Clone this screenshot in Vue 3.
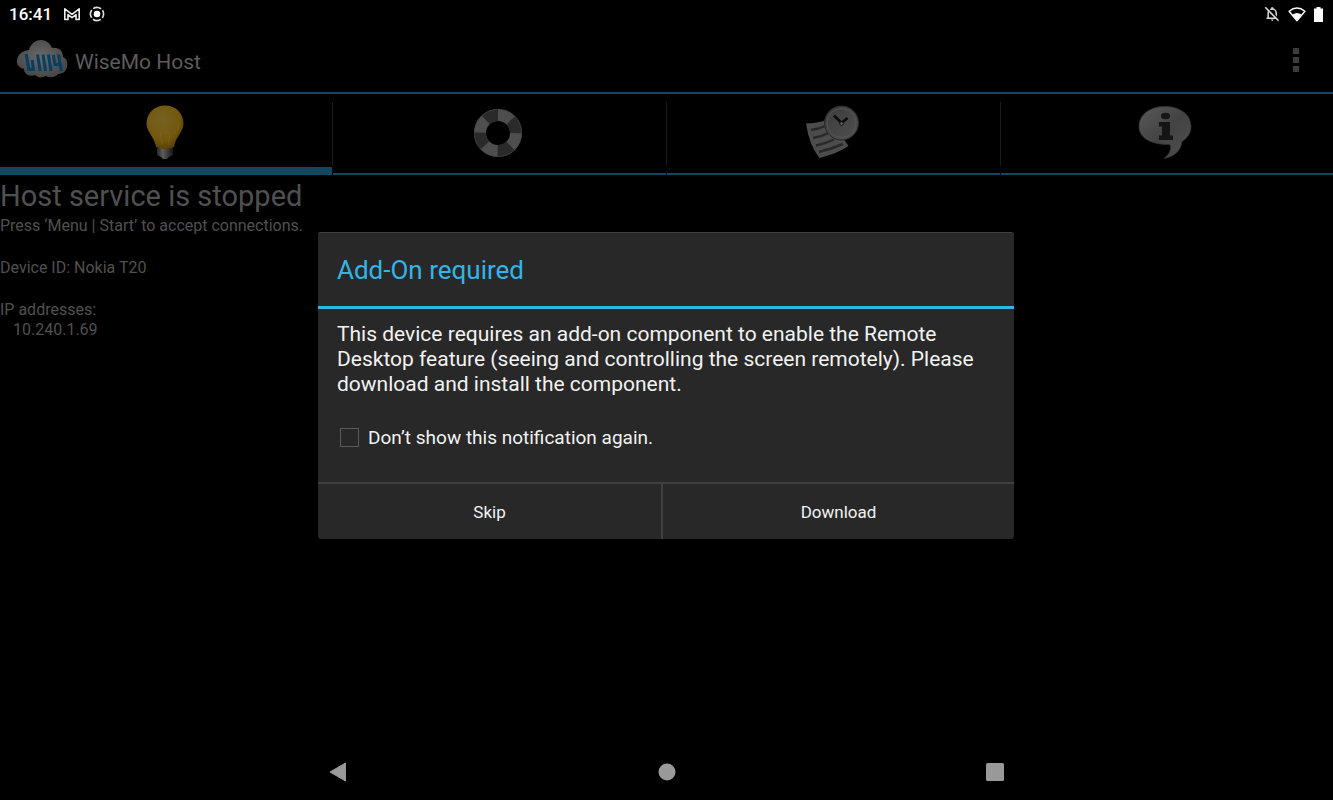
<template>
  <div class="screen">
    <header class="status">
      <div class="status-group">
        <time class="clock">16:41</time>
        <svg width="18" height="14" viewBox="0 0 18 14" aria-hidden="true">
          <path d="M1.800 12.500V1.800L9 7.300l7.200-5.500v10.700h-3.200V7.600L9 10.600 5 7.600v4.900z" fill="none" stroke="#eee" stroke-width="1.600" stroke-linejoin="round" />
        </svg>
        <svg width="16" height="16" viewBox="0 0 16 16" aria-hidden="true">
          <circle cx="8" cy="8" r="3.300" fill="#fff" />
          <circle cx="8" cy="8" r="6.600" fill="none" stroke="#ddd" stroke-width="1.600" stroke-dasharray="8.370 2" stroke-dashoffset="4.180" />
        </svg>
      </div>
      <div class="status-group right">
        <svg width="16" height="16" viewBox="0 0 16 16" aria-hidden="true">
          <path d="M4.200 11.800V7a4 4 0 0 1 8 0v4.800M2.500 12.200h11.300" fill="none" stroke="#ddd" stroke-width="1.500" />
          <path d="M7.200 1.200h2v2h-2zM6.800 13.600h2.800l-1.400 1.600z" fill="#ddd" />
          <path d="M2.600.9l13 13.400" stroke="#000" stroke-width="1.500" />
          <path d="M1.200 1.200l13.400 13.600" stroke="#ddd" stroke-width="1.500" />
        </svg>
        <svg width="18" height="15" viewBox="0 0 18 15" aria-hidden="true">
          <path d="M1.100 4.300Q9-2.300 16.900 4.300L9 13.700z" fill="none" stroke="#fff" stroke-width="1.400" stroke-linejoin="round" />
          <path d="M4.600 7.600Q9 4.400 13.400 7.600L9 13.500z" fill="#fff" />
        </svg>
        <svg width="9" height="15" viewBox="0 0 9 15" aria-hidden="true">
          <path d="M2.500 0h4v1.500H9V15H0V1.500h2.500z" fill="#fff" />
        </svg>
      </div>
    </header>

    <main class="app">
      <div class="app-bar">
        <svg class="logo" width="52" height="40" viewBox="0 0 52 40" aria-hidden="true">
          <defs>
            <radialGradient id="cloud" cx=".48" cy=".45" r=".6">
              <stop offset="0" stop-color="#696969" />
              <stop offset="1" stop-color="#444" />
            </radialGradient>
          </defs>
          <path d="M13 10C15 3 20 0 25 0s9 3 11 8c7-1 11 3 11 9 4 2 5 6 4 10-1 5-5 7-9 7-3 4-9 4-12 2-4 2-8 2-11-1-6 2-11-1-11-6-4-1-8-4-7-9 1-6 5-9 12-10z" fill="url(#cloud)" />
          <path d="M10.200 14l2.600 15.500h4.600L16.200 20M21.500 14.500l2.700 16.500M27 14.500l2.500 16.500M32.300 14.500l2.800 16.500M37.300 15l1.700 9.500h4.500M42.500 14.500l2.800 16.500" fill="none" stroke="#063f61" stroke-width="3" />
        </svg>
        <h1>{{ appName }}</h1>
        <button class="menu" type="button" aria-label="More options">
          <i></i><i></i><i></i>
        </button>
      </div>

      <nav class="tabs">
        <button
          v-for="tab in tabs"
          :key="tab"
          type="button"
          :class="{ active: tab === current }"
          :aria-label="tab"
          @click="current = tab"
        >
          <svg v-if="tab === 'Status'" width="56" height="56" viewBox="0 0 56 56">
            <defs>
              <radialGradient id="bulb" cx=".42" cy=".35" r=".65">
                <stop offset="0" stop-color="#756323" />
                <stop offset=".7" stop-color="#72570d" />
                <stop offset="1" stop-color="#5b4208" />
              </radialGradient>
              <linearGradient id="cap">
                <stop offset="0" stop-color="#252525" />
                <stop offset=".35" stop-color="#5c5c5c" />
                <stop offset="1" stop-color="#181818" />
              </linearGradient>
            </defs>
            <path d="M21 43h16v7l-4 2-2 2h-4l-2-2-4-2z" fill="url(#cap)" />
            <path d="M29 .5c11 0 18.500 8 18.500 18 0 9-7.500 12-9.500 23.500q-9 4-18 0C18 30.500 10.500 27.500 10.500 18.500 10.500 8.500 18 .5 29 .5z" fill="url(#bulb)" />
            <path d="M26 40l-2-13 4 2 3-2 3 2-2 11M43 17q1 8-5 12" fill="none" stroke="#896b1c" stroke-width="1" opacity=".4" />
          </svg>
          <svg v-else-if="tab === 'Help'" width="56" height="56" viewBox="0 0 56 56">
            <circle cx="28" cy="28" r="18" fill="none" stroke="#4e4e4e" stroke-width="12" />
            <circle cx="28" cy="28" r="18" fill="none" stroke="#2a2a2a" stroke-width="12" stroke-dasharray="14.137 14.137" stroke-dashoffset="14.137" transform="rotate(-90 28 28)" />
            <circle cx="28" cy="28" r="23.500" fill="none" stroke="#444" stroke-width=".8" opacity=".7" />
          </svg>
          <svg v-else-if="tab === 'Log'" width="56" height="56" viewBox="0 0 56 56">
            <defs>
              <linearGradient id="clock" x1="0" y1="0" x2="1" y2="1">
                <stop offset="0" stop-color="#3b3b3b" />
                <stop offset="1" stop-color="#505050" />
              </linearGradient>
            </defs>
            <path d="M2 18.500q10 0 24-4.500l18.500 27q-10 7-29 12Q5 40 2 18.500z" fill="#4c4c4c" />
            <path d="M7 25q8-1 14-4M9 33q8-1 15-5M12 40.500q10-2 18-6M15 47q12-3 24-8" fill="none" stroke="#292929" stroke-width="2.500" />
            <circle cx="37.500" cy="18" r="17" fill="url(#clock)" stroke="#292929" />
            <circle cx="37.500" cy="18" r="14.500" fill="none" stroke="#575757" stroke-width=".8" />
            <path d="M30 10.500l7.500 7.500 6-5" fill="none" stroke="#0b0b0b" stroke-width="2.500" />
            <circle cx="37.500" cy="18.500" r="1.800" fill="#666" stroke="#111" />
          </svg>
          <svg v-else width="56" height="56" viewBox="0 0 56 56">
            <defs>
              <linearGradient id="bubble" x1="0" y1="0" x2="1" y2="1">
                <stop offset="0" stop-color="#595959" />
                <stop offset=".5" stop-color="#434343" />
                <stop offset="1" stop-color="#505050" />
              </linearGradient>
            </defs>
            <path d="M28 1.500c15 0 26 8 26 20 0 7-4 12-9 15-1 9-7 15-18 17 5-4 8-9 6-14C14 40 2 33 2 21.500c0-12 11-20 26-20z" fill="url(#bubble)" stroke="#333" stroke-width=".7" />
            <path d="M22 17h11v13.500h3V35H22v-4.500h3v-9h-3z" fill="#151515" />
            <ellipse cx="28.500" cy="11" rx="4.500" ry="3.300" fill="#151515" />
          </svg>
        </button>
      </nav>

      <section class="info">
        <h2>Host service is stopped</h2>
        <p>Press ‘Menu | Start’ to accept connections.</p>
        <p class="block">Device ID: {{ deviceId }}</p>
        <p class="block">IP addresses:</p>
        <p v-for="ip in addresses" :key="ip" class="ip">{{ ip }}</p>
      </section>

      <div v-if="dialogOpen" class="overlay">
        <div class="dialog" role="dialog" aria-modal="true" aria-labelledby="dialog-title">
          <h3 id="dialog-title">Add-On required</h3>
          <div class="dialog-body">
            <p>
              This device requires an add-on component to enable the Remote Desktop feature
              (seeing and controlling the screen remotely). Please download and install the
              component.
            </p>
            <label for="dont-show">
              <input id="dont-show" v-model="dontShow" type="checkbox" />
              Don’t show this notification again.
            </label>
          </div>
          <div class="dialog-actions">
            <button type="button" @click="close">Skip</button>
            <button type="button" @click="close">Download</button>
          </div>
        </div>
      </div>
    </main>

    <footer class="system-nav">
      <button type="button" aria-label="Back">
        <svg width="20" height="20" viewBox="0 0 20 20">
          <path d="M1 10l15.500-9v18z" fill="#999" stroke="#999" stroke-linejoin="round" />
        </svg>
      </button>
      <button type="button" aria-label="Home">
        <svg width="20" height="20" viewBox="0 0 20 20"><circle cx="10" cy="10" r="8.500" fill="#999" /></svg>
      </button>
      <button type="button" aria-label="Recent apps">
        <svg width="20" height="20" viewBox="0 0 20 20"><rect x="1" y="1" width="18" height="18" rx="1.500" fill="#999" /></svg>
      </button>
    </footer>
  </div>
</template>

<script setup>
import { ref } from "vue";

const appName = "WiseMo Host";
const deviceId = "Nokia T20";
const addresses = ["10.240.1.69"];

const tabs = ["Status", "Help", "Log", "About"];
const current = ref("Status");

const dialogOpen = ref(true);
const dontShow = ref(false);

const close = () => {
  dialogOpen.value = false;
};
</script>

<style>
body {
  margin: 0;
  background: #000;
}
</style>

<style scoped>
.screen {
  display: flex;
  flex-direction: column;
  min-height: 100vh;
  background: #000;
  color: #505050;
  font-family: Roboto, "Liberation Sans", sans-serif;
}
h1,
h2,
h3,
p {
  margin: 0;
  font-weight: 400;
}
button {
  margin: 0;
  padding: 0;
  border: 0;
  background: none;
  color: inherit;
  font-family: inherit;
}
svg {
  display: block;
}

.status {
  display: flex;
  justify-content: space-between;
  align-items: center;
  height: 28px;
  padding: 0 10px 0 9px;
}
.status-group {
  display: flex;
  align-items: center;
  gap: 8px;
}
.clock {
  margin-right: 3px;
  color: #fff;
  font-size: 17px;
  font-weight: 500;
  line-height: 28px;
}

.app {
  position: relative;
  display: flex;
  flex-direction: column;
  flex: 1;
}
.app-bar {
  display: flex;
  align-items: center;
  height: 64px;
  padding: 0 30px 0 16px;
  border-bottom: 2px solid #13475d;
}
.app-bar h1 {
  flex: 1;
  margin-left: 7px;
  padding-top: 3px;
  color: #5c5c5c;
  font-size: 21px;
  line-height: 28px;
}
.menu {
  display: grid;
  gap: 3px;
  padding: 4px;
}
.menu i {
  width: 6px;
  height: 6px;
  background: #3c3c3c;
}

.tabs {
  display: grid;
  grid-template-columns: 332fr 333fr 333fr 332fr;
  column-gap: 1px;
  height: 81px;
  background: linear-gradient(#1b1b1b, #1b1b1b) 0 8px / 100% 64px no-repeat;
}
.tabs button {
  display: flex;
  justify-content: center;
  padding: 11px 4px 0 0;
  background: #000;
  border-bottom: 2px solid #13475d;
}
.tabs button.active {
  border-bottom-width: 8px;
}

.info {
  font-size: 16px;
  line-height: 20px;
}
.info h2 {
  padding-top: 2px;
  font-size: 29px;
  line-height: 39px;
}
.info .block {
  margin-top: 22px;
}
.info .ip {
  padding-left: 13px;
}

.overlay {
  position: absolute;
  inset: 0;
  display: flex;
  align-items: center;
  justify-content: center;
  padding-right: 1px;
}
.dialog {
  box-sizing: border-box;
  width: 696px;
  max-width: 96%;
  background: #282828;
  border-top: 1px solid #404040;
  border-radius: 3px;
  color: #f2f2f2;
}
.dialog h3 {
  padding: 21px 19px 20px;
  border-bottom: 3px solid #33b5e5;
  color: #33b5e5;
  font-size: 26px;
  line-height: 32px;
}
.dialog-body {
  padding: 13px 19px 32px;
  font-size: 21px;
  line-height: 25px;
}
.dialog-body label {
  display: flex;
  align-items: center;
  gap: 9px;
  margin-top: 28px;
  padding-left: 3px;
  font-size: 19px;
}
.dialog-body input {
  appearance: none;
  width: 19px;
  height: 19px;
  margin: 0;
  border: 1px solid #5a5a5a;
}
.dialog-body input:checked {
  background: #33b5e5;
}
.dialog-actions {
  display: grid;
  grid-template-columns: 343fr 353fr;
  border-top: 2px solid #404040;
}
.dialog-actions button {
  height: 55px;
  font-size: 17px;
}
.dialog-actions button + button {
  border-left: 2px solid #404040;
}

.system-nav {
  display: flex;
  justify-content: center;
  align-items: center;
  gap: 308px;
  height: 57px;
}
</style>
